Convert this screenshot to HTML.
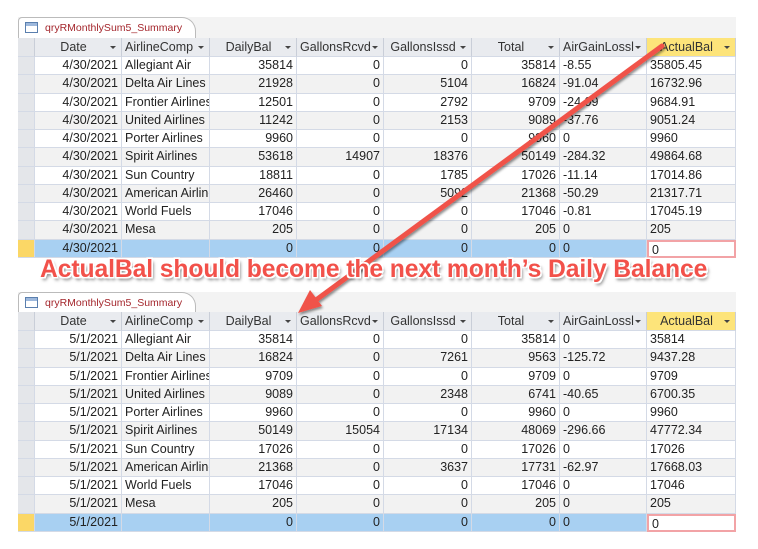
<!DOCTYPE html>
<html><head><meta charset="utf-8"><style>
body{margin:0;width:758px;height:549px;background:#fff;position:relative;overflow:hidden;font-family:"Liberation Sans",sans-serif;font-size:12.5px;color:#222}
.strip{position:absolute;left:18px;width:718px;height:21px;background:#f3f3f3}
.tab{position:absolute;left:18px;height:21px;width:178px;background:#fff;border:1px solid #bbb;border-bottom:none;border-radius:4px 14px 0 0;box-sizing:border-box}
.tab span{position:absolute;left:26px;top:4px;color:#a4262c;font-size:10.5px;white-space:nowrap}
.tab i{position:absolute;left:6px;top:4px;width:13px;height:11px;border:1px solid #5a7fae;background:linear-gradient(#9db8dc 0 3px,#fff 3px);box-sizing:border-box}
.grid{position:absolute;left:18px;width:718px}
.r{display:flex;height:18.27px}
.r div{box-sizing:border-box;border-right:1px solid #d4dae6;border-bottom:1px solid #d4dae6;padding:0 3px;line-height:17px;white-space:nowrap;overflow:hidden}
.h{height:19px}
.h div{background:#e9ebef;border-right:1px solid #c9ced8;line-height:18px;position:relative;color:#333}
.h div:after{content:"";position:absolute;right:5px;top:8px;border:3px solid transparent;border-top:3px solid #444}
.h div:first-child:after{display:none}
.h .y{background:#fde47a}
.r div:nth-child(1){width:17px;background:#e4e6ea}
.r div:nth-child(2){width:87px;text-align:right}
.r div:nth-child(3){width:88px}
.r div:nth-child(4){width:87px;text-align:right}
.r div:nth-child(5){width:87px;text-align:right}
.r div:nth-child(6){width:88px;text-align:right}
.r div:nth-child(7){width:88px;text-align:right}
.r div:nth-child(8){width:87px}
.r div:nth-child(9){width:89px}
.h div:nth-child(n){text-align:center;padding-right:12px}
.h div:nth-child(8),.h div:nth-child(3),.h div:nth-child(5){text-align:left;padding-left:3px}
.g{background:#f2f2f2}
.s div{background:#a8d0f2}
.s div:nth-child(1){background:#fbd766}
.s div:nth-child(9){background:#fff;border:2px solid #f2a3a6}
.msg{position:absolute;left:40px;top:256px;font-size:24.7px;font-weight:bold;color:#f2514a;white-space:nowrap;letter-spacing:-0.1px;text-shadow:-1.5px -1.5px 0 #fff,1.5px -1.5px 0 #fff,-1.5px 1.5px 0 #fff,1.5px 1.5px 0 #fff,2px 3px 3px rgba(0,0,0,.5)}
</style></head><body>
<div class="strip" style="top:17px"></div>
<div class="tab" style="top:17px"><i></i><span>qryRMonthlySum5_Summary</span></div>
<div class="grid" style="top:38px">
<div class="r h"><div></div><div>Date</div><div>AirlineComp</div><div>DailyBal</div><div>GallonsRcvd</div><div>GallonsIssd</div><div>Total</div><div>AirGainLossl</div><div class="y">ActualBal</div></div>
<div class="r"><div></div><div>4/30/2021</div><div>Allegiant Air</div><div>35814</div><div>0</div><div>0</div><div>35814</div><div>-8.55</div><div>35805.45</div></div>
<div class="r g"><div></div><div>4/30/2021</div><div>Delta Air Lines</div><div>21928</div><div>0</div><div>5104</div><div>16824</div><div>-91.04</div><div>16732.96</div></div>
<div class="r"><div></div><div>4/30/2021</div><div>Frontier Airlines</div><div>12501</div><div>0</div><div>2792</div><div>9709</div><div>-24.09</div><div>9684.91</div></div>
<div class="r g"><div></div><div>4/30/2021</div><div>United Airlines</div><div>11242</div><div>0</div><div>2153</div><div>9089</div><div>-37.76</div><div>9051.24</div></div>
<div class="r"><div></div><div>4/30/2021</div><div>Porter Airlines</div><div>9960</div><div>0</div><div>0</div><div>9960</div><div>0</div><div>9960</div></div>
<div class="r g"><div></div><div>4/30/2021</div><div>Spirit Airlines</div><div>53618</div><div>14907</div><div>18376</div><div>50149</div><div>-284.32</div><div>49864.68</div></div>
<div class="r"><div></div><div>4/30/2021</div><div>Sun Country</div><div>18811</div><div>0</div><div>1785</div><div>17026</div><div>-11.14</div><div>17014.86</div></div>
<div class="r g"><div></div><div>4/30/2021</div><div>American Airlines</div><div>26460</div><div>0</div><div>5092</div><div>21368</div><div>-50.29</div><div>21317.71</div></div>
<div class="r"><div></div><div>4/30/2021</div><div>World Fuels</div><div>17046</div><div>0</div><div>0</div><div>17046</div><div>-0.81</div><div>17045.19</div></div>
<div class="r g"><div></div><div>4/30/2021</div><div>Mesa</div><div>205</div><div>0</div><div>0</div><div>205</div><div>0</div><div>205</div></div>
<div class="r s"><div></div><div>4/30/2021</div><div></div><div>0</div><div>0</div><div>0</div><div>0</div><div>0</div><div>0</div></div>
</div>
<div class="strip" style="top:292px"></div>
<div class="tab" style="top:292px"><i></i><span>qryRMonthlySum5_Summary</span></div>
<div class="grid" style="top:312px">
<div class="r h"><div></div><div>Date</div><div>AirlineComp</div><div>DailyBal</div><div>GallonsRcvd</div><div>GallonsIssd</div><div>Total</div><div>AirGainLossl</div><div class="y">ActualBal</div></div>
<div class="r"><div></div><div>5/1/2021</div><div>Allegiant Air</div><div>35814</div><div>0</div><div>0</div><div>35814</div><div>0</div><div>35814</div></div>
<div class="r g"><div></div><div>5/1/2021</div><div>Delta Air Lines</div><div>16824</div><div>0</div><div>7261</div><div>9563</div><div>-125.72</div><div>9437.28</div></div>
<div class="r"><div></div><div>5/1/2021</div><div>Frontier Airlines</div><div>9709</div><div>0</div><div>0</div><div>9709</div><div>0</div><div>9709</div></div>
<div class="r g"><div></div><div>5/1/2021</div><div>United Airlines</div><div>9089</div><div>0</div><div>2348</div><div>6741</div><div>-40.65</div><div>6700.35</div></div>
<div class="r"><div></div><div>5/1/2021</div><div>Porter Airlines</div><div>9960</div><div>0</div><div>0</div><div>9960</div><div>0</div><div>9960</div></div>
<div class="r g"><div></div><div>5/1/2021</div><div>Spirit Airlines</div><div>50149</div><div>15054</div><div>17134</div><div>48069</div><div>-296.66</div><div>47772.34</div></div>
<div class="r"><div></div><div>5/1/2021</div><div>Sun Country</div><div>17026</div><div>0</div><div>0</div><div>17026</div><div>0</div><div>17026</div></div>
<div class="r g"><div></div><div>5/1/2021</div><div>American Airlines</div><div>21368</div><div>0</div><div>3637</div><div>17731</div><div>-62.97</div><div>17668.03</div></div>
<div class="r"><div></div><div>5/1/2021</div><div>World Fuels</div><div>17046</div><div>0</div><div>0</div><div>17046</div><div>0</div><div>17046</div></div>
<div class="r g"><div></div><div>5/1/2021</div><div>Mesa</div><div>205</div><div>0</div><div>0</div><div>205</div><div>0</div><div>205</div></div>
<div class="r s"><div></div><div>5/1/2021</div><div></div><div>0</div><div>0</div><div>0</div><div>0</div><div>0</div><div>0</div></div>
</div>
<svg style="position:absolute;left:0;top:0" width="758" height="549">
<defs><filter id="sh"><feDropShadow dx="1" dy="2" stdDeviation="1.2" flood-opacity=".45"/></filter></defs>
<g filter="url(#sh)"><line x1="662" y1="46" x2="316" y2="300" stroke="#f0524a" stroke-width="5" stroke-linecap="round"/>
<polygon points="298,313 310,290 322,306" fill="#f0524a"/></g>
</svg>
<div class="msg">ActualBal should become the next month’s Daily Balance</div>
</body></html>
